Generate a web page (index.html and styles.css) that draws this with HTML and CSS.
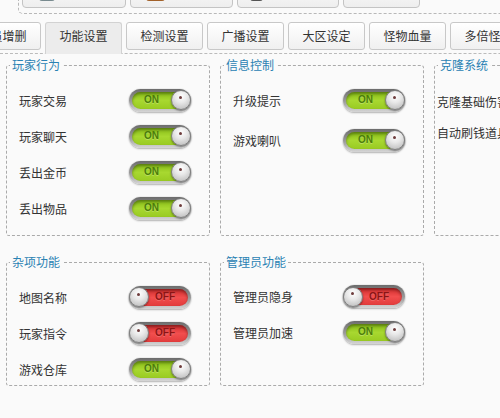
FILE: index.html
```html
<!DOCTYPE html>
<html lang="zh">
<head>
<meta charset="utf-8">
<title>功能设置</title>
<link rel="stylesheet" href="styles.css">
</head>
<body>
<div class="toolbar">
  <div class="tbtn w1"><span class="ico ico-a"></span></div>
  <div class="tbtn w2"><span class="ico ico-b"></span></div>
  <div class="tbtn w3"><span class="ico ico-c"></span></div>
  <div class="tbtn w4"></div>
</div>
<div class="tabs">
  <div class="tab">成员增删</div>
  <div class="tab active">功能设置</div>
  <div class="tab">检测设置</div>
  <div class="tab">广播设置</div>
  <div class="tab">大区设定</div>
  <div class="tab">怪物血量</div>
  <div class="tab">多倍怪物</div>
</div>
<div class="panel">
  <fieldset class="group tall">
    <legend>玩家行为</legend>
    <div class="rows r36">
      <div class="row"><span>玩家交易</span><div class="toggle on"><div class="track"><span class="state">ON</span><span class="knob"></span></div></div></div>
      <div class="row"><span>玩家聊天</span><div class="toggle on"><div class="track"><span class="state">ON</span><span class="knob"></span></div></div></div>
      <div class="row"><span>丢出金币</span><div class="toggle on"><div class="track"><span class="state">ON</span><span class="knob"></span></div></div></div>
      <div class="row"><span>丢出物品</span><div class="toggle on"><div class="track"><span class="state">ON</span><span class="knob"></span></div></div></div>
    </div>
  </fieldset>
  <fieldset class="group tall">
    <legend>信息控制</legend>
    <div class="rows r40">
      <div class="row"><span>升级提示</span><div class="toggle on"><div class="track"><span class="state">ON</span><span class="knob"></span></div></div></div>
      <div class="row"><span>游戏喇叭</span><div class="toggle on"><div class="track"><span class="state">ON</span><span class="knob"></span></div></div></div>
    </div>
  </fieldset>
  <fieldset class="group tall">
    <legend>克隆系统</legend>
    <div class="rows r31">
      <div class="row plain"><span>克隆基础伤害倍率</span></div>
      <div class="row plain"><span>自动刷钱道具编号</span></div>
    </div>
  </fieldset>
  <fieldset class="group short">
    <legend>杂项功能</legend>
    <div class="rows r36">
      <div class="row"><span>地图名称</span><div class="toggle off"><div class="track"><span class="knob"></span><span class="state">OFF</span></div></div></div>
      <div class="row"><span>玩家指令</span><div class="toggle off"><div class="track"><span class="knob"></span><span class="state">OFF</span></div></div></div>
      <div class="row"><span>游戏仓库</span><div class="toggle on"><div class="track"><span class="state">ON</span><span class="knob"></span></div></div></div>
    </div>
  </fieldset>
  <fieldset class="group short">
    <legend>管理员功能</legend>
    <div class="rows r35">
      <div class="row"><span>管理员隐身</span><div class="toggle off"><div class="track"><span class="knob"></span><span class="state">OFF</span></div></div></div>
      <div class="row"><span>管理员加速</span><div class="toggle on"><div class="track"><span class="state">ON</span><span class="knob"></span></div></div></div>
    </div>
  </fieldset>
</div>
</body>
</html>
```
FILE: styles.css
```css
html, body {
  margin: 0;
  padding: 0;
}
body {
  width: 500px;
  height: 418px;
  overflow: hidden;
  background: #fafafa;
  font-family: "Noto Sans CJK SC", "Noto Sans", sans-serif;
  font-size: 12px;
  color: #333;
}

/* top toolbar (only its bottom part is visible) */
.toolbar {
  margin-left: 18px;
  height: 13px;
  border-left: 1px dashed #b8b8b8;
  border-bottom: 1px dashed #b8b8b8;
  border-bottom-left-radius: 5px;
  display: flex;
  align-items: flex-end;
  gap: 4px;
  padding-left: 3px;
}
.tbtn {
  flex: none;
  height: 30px;
  margin-bottom: 5px;
  box-sizing: border-box;
  border: 1px solid #c4c4c4;
  border-radius: 4px;
  background: linear-gradient(#ffffff, #eeeeee);
  display: flex;
  align-items: flex-end;
  padding: 0 0 6px 16px;
}
.w1 { width: 104px; }
.w2 { width: 103px; padding-left: 15px; }
.w3 { width: 102px; padding-left: 12px; }
.w4 { width: 77px; }
.ico {
  width: 16px;
  height: 16px;
  border-radius: 3px;
}
.ico-a { background: linear-gradient(#3e8f9a, #7a8a8e); }
.ico-b { background: linear-gradient(#e0801e, #a0602a); width: 19px; }
.ico-c { background: linear-gradient(#333, #555); width: 13px; }

/* tabs */
.tabs {
  display: flex;
  align-items: flex-start;
  gap: 4px;
  height: 31px;
  margin: 8px 0 0 -36px;
}
.tab {
  flex: none;
  width: 77px;
  height: 28px;
  box-sizing: border-box;
  border: 1px solid #c8c8c8;
  border-radius: 3px;
  background: linear-gradient(#ffffff, #f0f0f0);
  text-align: center;
  line-height: 26px;
  color: #333;
}
.tab.active {
  height: 32px;
  border-color: #d2d2d2;
  border-bottom: none;
  border-radius: 3px 3px 0 0;
  background: #ececec;
  position: relative;
  z-index: 1;
}

/* content */
.panel {
  border-top: 1px dashed #bbbbbb;
  padding: 3px 0 0 6px;
  display: grid;
  grid-template-columns: 204px 204px 200px;
  column-gap: 10px;
  row-gap: 18px;
  width: 640px;
}
.group {
  margin: 0;
  padding: 0;
  min-width: 0;
  box-sizing: border-box;
  border: 1px dashed #aaaaaa;
  border-radius: 3px;
}
.group.tall { height: 179px; }
.group.short { height: 132px; }
.group legend {
  margin-left: 3px;
  padding: 0 2px;
  line-height: 16px;
  color: #2a82b3;
  font-size: 12px;
}
.rows { display: flex; flex-direction: column; }
.r36 { padding-top: 9px; }
.r36 .row { height: 36px; }
.r35 { padding-top: 9px; }
.r35 .row { height: 35.5px; }
.r40 { padding-top: 7px; }
.r40 .row { height: 40px; }
.r31 { padding-top: 13px; }
.r31 .row { height: 31px; }
.row {
  display: flex;
  align-items: center;
  justify-content: space-between;
  padding: 0 18px 0 12px;
  white-space: nowrap;
}
.row.plain { padding-left: 2px; }

/* toggle switch */
.toggle {
  flex: none;
  width: 62px;
  height: 23px;
  box-sizing: border-box;
  padding: 3px;
  border-radius: 12px;
  background: linear-gradient(#6c6c6c, #9c9c9c 55%, #d6d6d6);
  box-shadow: 0 1px 2px rgba(0, 0, 0, 0.25), 0 0 0 1px rgba(0, 0, 0, 0.04);
  display: flex;
}
.track {
  flex: 1;
  border-radius: 9px;
  display: flex;
  align-items: center;
  justify-content: space-between;
  box-shadow: inset 0 2px 3px rgba(0, 0, 0, 0.35);
}
.on .track {
  background: linear-gradient(#86bc16, #a8d830 50%, #99cb22);
}
.off .track {
  background: linear-gradient(#d02c2c, #f24e4e 50%, #e23c3c);
}
.state {
  font: bold 10px "Liberation Sans", Arial, sans-serif;
  line-height: 12px;
}
.on .state {
  color: #4b7c0a;
  margin-left: 12px;
  text-shadow: 0 1px 0 rgba(255, 255, 255, 0.25);
}
.off .state {
  color: #8c1414;
  margin-right: 13px;
  text-shadow: 0 1px 0 rgba(255, 255, 255, 0.2);
}
.knob {
  flex: none;
  width: 20px;
  height: 20px;
  box-sizing: border-box;
  border-radius: 50%;
  border: 1px solid #808080;
  background: radial-gradient(circle at 50% 30%, #ffffff 0, #e8e8e8 40%, #b4b4b4 100%);
  box-shadow: 0 1px 2px rgba(0, 0, 0, 0.45);
  display: flex;
  align-items: center;
  justify-content: center;
}
.on .knob { margin-right: -3px; }
.off .knob { margin-left: -3px; }
.knob::after {
  content: "";
  width: 3px;
  height: 3px;
  border-radius: 50%;
  background: #6e3c3c;
  transform: translate(-1px, -3px);
}
```
